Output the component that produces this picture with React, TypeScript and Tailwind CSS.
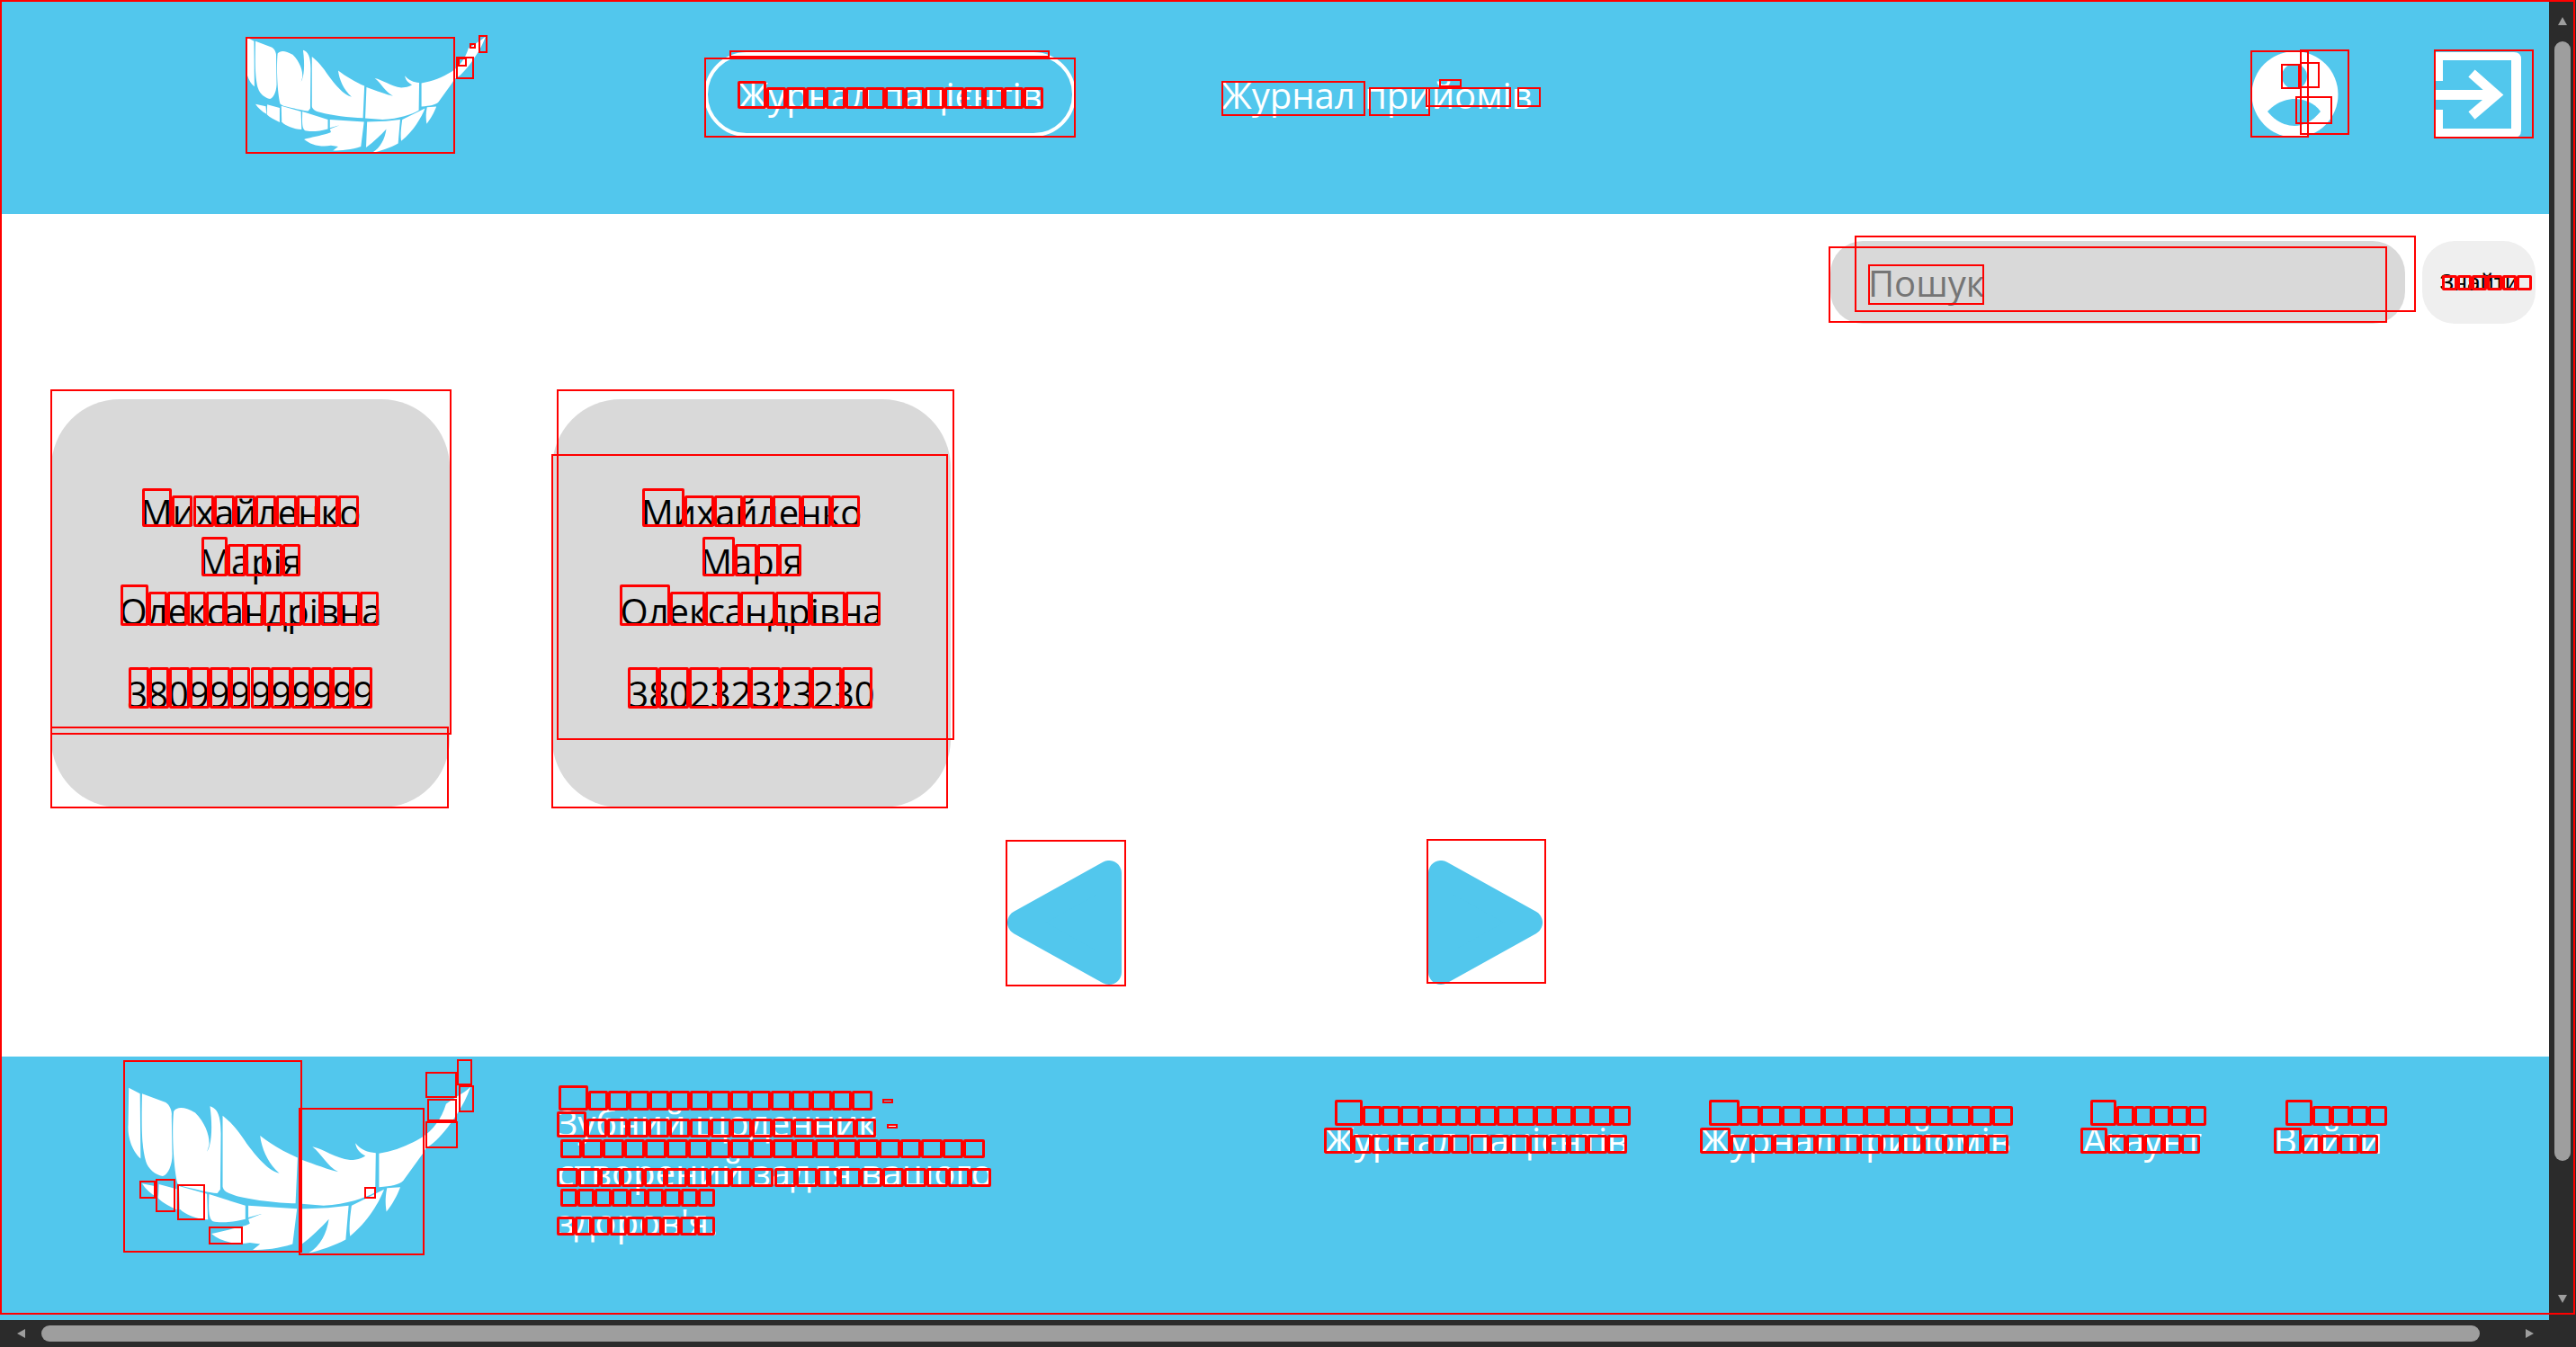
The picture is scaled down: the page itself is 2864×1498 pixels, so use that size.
const FONT = "font-['Open_Sans',sans-serif]"

// Debug-style outlines that sit on top of the screenshot: [left, top, right, bottom]
const OUTLINES: number[][] = [
  [0, 0, 2863, 1462],
  [273, 41, 506, 171], [507, 63, 527, 88], [509, 64, 519, 74], [522, 48, 529, 54], [532, 39, 542, 59],
  [783, 64, 1196, 153], [811, 56, 1167, 64],
  [1358, 90, 1518, 129], [1522, 97, 1590, 129], [1585, 97, 1680, 119], [1600, 88, 1625, 97], [1687, 97, 1713, 119],
  [2502, 56, 2567, 153], [2557, 55, 2612, 150], [2536, 71, 2557, 99], [2557, 69, 2579, 98], [2552, 107, 2593, 138],
  [2706, 55, 2817, 154],
  [2062, 262, 2686, 347], [2033, 274, 2654, 359], [2077, 294, 2206, 339],
  [56, 433, 502, 817], [56, 808, 499, 899], [619, 433, 1061, 823], [613, 505, 1054, 899],
  [1118, 934, 1252, 1097], [1586, 933, 1719, 1094],
  [137, 1179, 336, 1393], [332, 1232, 472, 1396], [473, 1192, 508, 1221], [475, 1222, 508, 1247], [473, 1247, 509, 1277],
  [508, 1178, 525, 1207], [510, 1207, 527, 1237], [155, 1313, 173, 1333], [173, 1311, 195, 1348], [197, 1317, 228, 1357],
  [232, 1364, 270, 1384], [405, 1320, 418, 1333],
  [981, 1222, 993, 1227], [986, 1250, 998, 1255],
]

// Rows of glyph boxes: [left, top, right, bottom, count, capital top]
// A row with a capital top starts with one wider, taller box
const GLYPH_ROWS: number[][] = [
  [820, 97, 1160, 121, 15, 90], [2715, 306, 2815, 323, 6],
  [158, 551, 399, 586, 10, 543], [224, 605, 334, 641, 5, 597], [134, 658, 421, 696, 13, 650], [143, 742, 414, 788, 12],
  [714, 551, 956, 586, 7, 543], [781, 605, 891, 641, 4, 597], [689, 658, 979, 696, 7, 650], [698, 742, 970, 788, 8],
  [621, 1213, 970, 1235, 15, 1207], [619, 1244, 974, 1265, 15, 1236], [623, 1267, 1095, 1288, 20], [619, 1299, 1102, 1320, 20],
  [623, 1322, 795, 1342, 9], [619, 1353, 795, 1374, 9],
  [1484, 1230, 1813, 1252, 15, 1223], [1472, 1262, 1809, 1283, 15, 1254], [1900, 1230, 2238, 1252, 14, 1223], [1890, 1262, 2233, 1283, 14, 1254],
  [2324, 1230, 2453, 1252, 6, 1223], [2313, 1262, 2446, 1283, 6, 1254], [2541, 1230, 2654, 1252, 5, 1223], [2528, 1262, 2644, 1283, 5, 1254],
]

function glyphBoxes([l, t, r, b, n, capTop]: number[]) {
  const capWidth = capTop ? 1.45 : 1
  const w = (r - l) / (n - 1 + capWidth)
  return Array.from({ length: n }, (_, i) => {
    if (i === 0) return [l, capTop ?? t, l + w * capWidth, b]
    const left = l + w * (capWidth + i - 1)
    return [left, t, left + w, b]
  })
}

function Outlines() {
  return (
    <div className="absolute inset-0 pointer-events-none">
      {OUTLINES.map(([l, t, r, b], i) => (
        <div
          key={i}
          className="absolute border-2 border-[#ff0000]"
          style={{ left: l, top: t, width: r - l, height: b - t }}
        />
      ))}
      {GLYPH_ROWS.flatMap(glyphBoxes).map(([l, t, r, b], i) => (
        <div
          key={i}
          className="absolute border-[3px] rounded-[2px] border-[#ff0000]"
          style={{ left: l, top: t, width: r - l, height: b - t }}
        />
      ))}
    </div>
  )
}

function TeethLogo({ className }: { className: string }) {
  return (
    <svg viewBox="55 140 1170 570" className={className} fill="#ffffff">
      <path d="M60 145 L98 165 L100 385 C70 360 55 310 58 270 Z" />
      <path d="M105 165 L185 195 C200 205 207 225 205 240 L207 360 C210 400 195 440 175 445 C150 440 125 420 118 395 C105 350 102 300 105 165 Z" />
      <path d="M212 225 C225 208 250 210 285 230 C320 265 335 310 332 340 L325 362 C340 340 345 280 335 208 C360 215 372 240 372 300 L370 490 L360 503 C330 500 290 490 240 478 L225 470 C212 420 205 300 212 225 Z" />
      <path d="M378 240 C410 265 430 290 460 335 C490 375 530 425 570 435 C530 400 510 350 505 308 C540 335 590 365 632 382 L625 537 C560 535 470 525 420 510 C395 503 380 495 378 480 Z" />
      <path d="M642 388 C690 405 740 425 770 430 C730 410 715 370 682 345 C720 352 760 385 810 390 C840 390 855 380 862 376 C840 365 830 350 828 333 C845 355 870 365 897 366 L895 500 C860 520 800 540 720 545 L636 538 Z" />
      <path d="M908 368 C960 360 1010 340 1055 312 C1090 290 1120 250 1135 200 C1170 175 1200 160 1218 142 C1200 195 1170 240 1140 280 C1115 310 1095 335 1068 348 L1055 370 L990 460 C975 475 950 478 908 482 Z" />
      <path d="M105 470 L155 480 L158 518 C135 505 118 490 105 470 Z" />
      <path d="M162 472 L222 488 L222 558 C195 545 175 535 160 520 Z" />
      <path d="M230 478 L325 505 L328 592 C290 590 250 575 232 555 Z" />
      <path d="M332 506 L455 545 L455 590 C420 600 370 605 345 598 C330 590 330 560 332 506 Z" />
      <path d="M340 640 C390 628 470 612 470 605 L465 590 L512 572 L465 585 L465 545 L630 555 L615 675 C570 690 520 695 480 695 L505 675 L470 670 C420 680 370 665 340 640 Z" />
      <path d="M645 556 L735 552 L805 545 L795 660 C760 680 700 700 670 705 C710 680 730 640 738 590 C710 620 680 650 640 680 Z" />
      <path d="M815 545 L925 490 C910 530 870 600 810 648 C805 620 810 580 815 545 Z" />
      <path d="M935 485 L980 482 C970 510 950 545 933 565 C928 530 930 510 935 485 Z" />
    </svg>
  )
}

function ProfileIcon() {
  return (
    <svg viewBox="0 0 97 96" className="w-[97px] h-[96px]">
      <circle cx="48.5" cy="48" r="48" fill="#ffffff" />
      <circle cx="48" cy="28" r="14" fill="#52c7ed" />
      <path d="M18 67 C28 56 40 53 48 53 C58 53 70 57 77 67 C68 78 58 83 48 83 C37 83 26 77 18 67 Z" fill="#52c7ed" />
    </svg>
  )
}

function LogoutIcon() {
  return (
    <svg viewBox="0 0 96 95" className="w-[96px] h-[95px]" fill="none" stroke="#ffffff">
      <path d="M0 0 H88 Q96 0 96 8 V87 Q96 95 88 95 H0 V0 Z" fill="#ffffff" stroke="none" />
      <path d="M9 9 H85 V85 H9 V64 H0 V32 H9 Z" fill="#52c7ed" stroke="none" />
      <path d="M0 47.5 H70" strokeWidth="11" />
      <path d="M41 24 L68 48 L41 71" strokeWidth="11" strokeLinejoin="miter" transform="translate(0 -0.5)" />
    </svg>
  )
}

function Triangle({ left }: { left?: boolean }) {
  return (
    <svg viewBox="0 0 128 138" className="w-[128px] h-[138px]">
      <path
        d={left ? 'M113 14 L113 124 L14 69 Z' : 'M15 14 L15 124 L114 69 Z'}
        fill="#52c7ed"
        stroke="#52c7ed"
        strokeWidth="28"
        strokeLinejoin="round"
      />
    </svg>
  )
}

function PatientCard({ phone }: { phone: string }) {
  return (
    <div className="w-[443px] h-[454px] rounded-[76px] bg-[#d9d9d9] flex flex-col items-center justify-center pb-[2px] text-center text-[40px] leading-[55px] text-black">
      <p>Михайленко</p>
      <p>Марія</p>
      <p>Олександрівна</p>
      <p className="mt-[37px]">{phone}</p>
    </div>
  )
}

export default function App() {
  return (
    <div className={`relative w-[2864px] h-[1498px] overflow-hidden flex flex-col bg-white ${FONT}`}>
      <div className="flex h-[1468px]">
        <div className="w-[2834px] flex flex-col">
          <header className="h-[238px] bg-[#52c7ed] flex items-center pb-[28px] text-[40px] leading-[55px] text-white">
            <TeethLogo className="ml-[272px] w-[270px] h-[131px]" />
            <a className="ml-[241px] w-[413px] h-[94px] rounded-[47px] border-4 border-white flex items-center justify-center">
              Журнал пацієнтів
            </a>
            <a className="ml-[162px]">Журнал прийомів</a>
            <div className="ml-auto mr-[31px] flex items-center gap-[107px]">
              <ProfileIcon />
              <LogoutIcon />
            </div>
          </header>

          <main className="flex-1 pt-[30px]">
            <div className="flex justify-end gap-[19px] pr-[15px]">
              <input
                placeholder="Пошук"
                className="w-[639px] h-[92px] rounded-[36px] bg-[#d9d9d9] pl-[42px] text-[40px] text-black outline-none placeholder:text-[#757575]"
              />
              <button className="w-[126px] h-[92px] rounded-[36px] bg-[#efefef] text-black text-[26.67px] font-['Liberation_Sans',sans-serif]">
                Знайти
              </button>
            </div>
            <div className="mt-[84px] pl-[57px] flex gap-[114px]">
              <PatientCard phone="380999999999" />
              <PatientCard phone="380232323230" />
            </div>
            <div className="mt-[59px] pl-[1120px] flex gap-[339px]">
              <Triangle left />
              <Triangle />
            </div>
          </main>

          <footer className="h-[293px] bg-[#52c7ed] flex items-start text-white text-[40px] leading-[55px]">
            <TeethLogo className="ml-[140px] mt-[33px] w-[387px] h-[187px]" />
            <p className="ml-[92px] mt-[46px] w-[520px]">Зубний щоденник - створений задля вашого здоров'я.</p>
            <nav className="ml-[333px] mt-[65px] flex gap-[80px]">
              <a>Журнал пацієнтів</a>
              <a>Журнал прийомів</a>
              <a>Акаунт</a>
              <a>Вийти</a>
            </nav>
          </footer>
        </div>

        {/* vertical scrollbar */}
        <div className="w-[30px] bg-[#2b2b2b] flex flex-col items-center pt-[19px]">
          <svg viewBox="0 0 10 9" className="w-[10px] h-[9px]"><path d="M5 0 L10 9 H0 Z" fill="#9e9e9e" /></svg>
          <div className="mt-[18px] w-[18px] h-[1245px] rounded-full bg-[#9e9e9e]" />
          <svg viewBox="0 0 10 9" className="mt-[149px] w-[10px] h-[9px]"><path d="M0 0 H10 L5 9 Z" fill="#9e9e9e" /></svg>
        </div>
      </div>

      {/* horizontal scrollbar */}
      <div className="h-[30px] bg-[#2b2b2b] flex items-center pl-[19px]">
        <svg viewBox="0 0 9 10" className="w-[9px] h-[10px]"><path d="M9 0 V10 L0 5 Z" fill="#9e9e9e" /></svg>
        <div className="ml-[18px] w-[2711px] h-[18px] rounded-full bg-[#9e9e9e]" />
        <svg viewBox="0 0 9 10" className="ml-[51px] w-[9px] h-[10px]"><path d="M0 0 L9 5 L0 10 Z" fill="#9e9e9e" /></svg>
      </div>

      <Outlines />
    </div>
  )
}
